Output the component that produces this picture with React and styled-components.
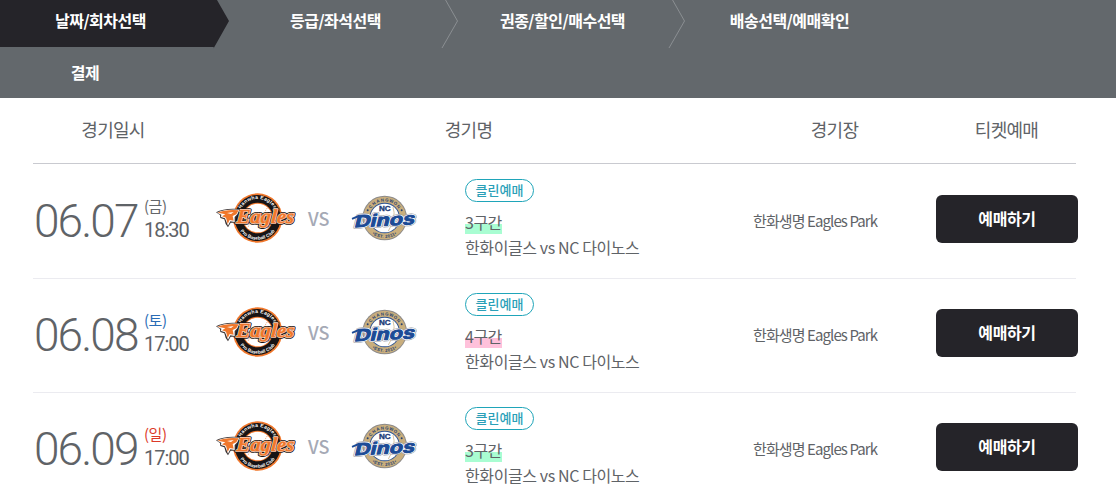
import React from 'react';
import styled, { createGlobalStyle } from 'styled-components';

const steps = [
  { title: '날짜/회차선택', width: 229, end: 28, active: true },
  { title: '등급/좌석선택', width: 229, end: 16 },
  { title: '권종/할인/매수선택', width: 227, end: 18 },
  { title: '배송선택/예매확인', width: 209, end: 0, last: true },
  { title: '결제', width: 170, end: 0, last: true },
];

const games = [
  { date: '06.07', day: '금', time: '18:30', color: '#63666a', section: '3구간', mark: '#a9fdd2' },
  { date: '06.08', day: '토', time: '17:00', color: '#2a6cb5', section: '4구간', mark: '#ffc1db' },
  { date: '06.09', day: '일', time: '17:00', color: '#dc3a2a', section: '3구간', mark: '#a9fdd2' },
];

const EaglesLogo = ({ id }) => (
  <EaglesSvg viewBox="0 0 240 156">
    <defs>
      <path id={`${id}-top`} d="M68 78 A55 55 0 0 1 182 78" />
      <path id={`${id}-bottom`} d="M60 78 A65 65 0 0 0 190 78" />
    </defs>
    <circle cx="125" cy="78" r="74" fill="#f0772b" />
    <circle cx="125" cy="78" r="69" fill="#171415" />
    <circle cx="125" cy="78" r="46" fill="#f0772b" />
    <circle cx="125" cy="78" r="43" fill="#fff" />
    <path d="M96 48 Q112 64 97 104 M154 48 Q138 64 153 104" fill="none" stroke="#f3a06f" strokeWidth="3" strokeDasharray="4 3" />
    <text fontFamily="Liberation Sans" fontSize="15" fontWeight="700" fill="#fff" letterSpacing="1">
      <textPath href={`#${id}-top`} startOffset="50%" textAnchor="middle">Hanwha Eagles</textPath>
    </text>
    <text fontFamily="Liberation Sans" fontSize="14" fontWeight="700" fill="#fff">
      <textPath href={`#${id}-bottom`} startOffset="50%" textAnchor="middle">Pro Baseball Club</textPath>
    </text>
    <g transform="translate(60 94) skewX(-4)" fontFamily="Liberation Serif" fontStyle="italic" fontWeight="700" fontSize="60" strokeLinejoin="round">
      <text textLength="174" lengthAdjust="spacingAndGlyphs" fill="#171415" stroke="#171415" strokeWidth="10">Eagles</text>
      <text aria-hidden="true" textLength="174" lengthAdjust="spacingAndGlyphs" fill="#f5c6a4" stroke="#fbdcc6" strokeWidth="5">Eagles</text>
      <text aria-hidden="true" textLength="174" lengthAdjust="spacingAndGlyphs" fill="#f0772b" stroke="#f0772b" strokeWidth="1">Eagles</text>
    </g>
    <path d="M0 61 Q24 47 72 51 L66 67 L60 80 L58 92 L44 92 L36 106 L29 96 L25 82 L13 78 L12 69Z" fill="#3a3232" />
    <path d="M3 62 Q28 50 70 53 L64 67 L56 75 L56 90 L43 88 L36 101 L27 79 L15 75 L16 68Z" fill="#fff" />
    <path d="M5 62 Q30 52 68 55 L61 67 L50 72 L53 86 L41 84 L35 96 L30 77 L18 73 L28 67Z" fill="#f0772b" />
    <path d="M33 63 L53 60 L45 66Z" fill="#fff" />
  </EaglesSvg>
);

// letters of the ring are set one by one, so each stays inside the ring
const ringTop = 'CHANGWON'.split('');

const DinosLogo = ({ id }) => (
  <DinosSvg viewBox="0 0 198 138">
    <defs>
      <path id={`${id}-bottom`} d="M41 69 A60 60 0 0 0 161 69" />
    </defs>
    <circle cx="101" cy="69" r="67" fill="#8d8b8a" />
    <circle cx="101" cy="69" r="64" fill="#c9ae7d" />
    <circle cx="101" cy="69" r="46" fill="#2b5292" />
    <circle cx="101" cy="69" r="43" fill="#fff" />
    <path d="M126 36 Q137 68 112 108" fill="none" stroke="#d9c7a4" strokeWidth="3" />
    {ringTop.map((letter, i) => (
      <text
        key={i}
        transform={`rotate(${(i - 3.5) * 14.5} 101 69)`}
        x="101"
        y="19"
        textAnchor="middle"
        fontFamily="Liberation Sans"
        fontSize="13"
        fontWeight="700"
        fill="#25406f"
      >
        {letter}
      </text>
    ))}
    <circle cx="50" cy="46" r="3" fill="#25406f" />
    <circle cx="152" cy="46" r="3" fill="#25406f" />
    <text fontFamily="Liberation Sans" fontSize="13" fontWeight="700" fill="#25406f" letterSpacing="1">
      <textPath href={`#${id}-bottom`} startOffset="50%" textAnchor="middle">•EST. 2011•</textPath>
    </text>
    <text x="84" y="48" textLength="35" lengthAdjust="spacingAndGlyphs" fontFamily="Liberation Sans" fontSize="20" fontWeight="700" fill="#1c3c78" stroke="#1c3c78">NC</text>
    {/* wordmark, rising slightly to the right */}
    <g transform="translate(9 97) skewY(-3) skewX(-14)" fontFamily="Liberation Sans" fontWeight="700" fontSize="51" strokeLinejoin="round">
      <text textLength="180" lengthAdjust="spacingAndGlyphs" fill="#9a9ca2" stroke="#9a9ca2" strokeWidth="10">Dinos</text>
      <text aria-hidden="true" textLength="180" lengthAdjust="spacingAndGlyphs" fill="#fff" stroke="#fff" strokeWidth="7">Dinos</text>
      <text aria-hidden="true" textLength="180" lengthAdjust="spacingAndGlyphs" fill="#1c4b96" stroke="#1c4b96" strokeWidth="3">Dinos</text>
    </g>
    <path d="M2 69 L24 59 L22 67 L4 74Z" fill="#1c4b96" />
  </DinosSvg>
);

const App = () => {
  return (
    <Page>
      <GlobalStyle />
      <Steps>
        {steps.map((step) => (
          <Step key={step.title} $width={step.width} $end={step.end} $active={step.active}>
            {step.title}
            {!step.last && (
              <Arrow viewBox="0 0 18 49">
                {step.active ? (
                  <>
                    <path d="M0 0H6L18 21L2.500 48.500V47H0Z" fill="#252429" />
                    <path d="M0 47H2.500V49H0Z" fill="#63686c" />
                  </>
                ) : (
                  <path d="M5 -1L17.500 21L2 48" fill="none" stroke="#8b8f92" />
                )}
              </Arrow>
            )}
          </Step>
        ))}
      </Steps>

      <Table>
        <Header>
          <span>경기일시</span>
          <span>경기명</span>
          <span>경기장</span>
          <span>티켓예매</span>
        </Header>
        {games.map((game) => (
          <Row key={game.date}>
            <DateCell>
              <BigDate>{game.date}</BigDate>
              <DayTime>
                <Day $color={game.color}>({game.day})</Day>
                <Time>{game.time}</Time>
              </DayTime>
            </DateCell>
            <Match>
              <EaglesLogo id={`eagles-${game.date}`} />
              <Versus>VS</Versus>
              <DinosLogo id={`dinos-${game.date}`} />
              <Info>
                <Badge>클린예매</Badge>
                <Section $mark={game.mark}>{game.section}</Section>
                <Title>한화이글스 vs NC 다이노스</Title>
              </Info>
            </Match>
            <Stadium>한화생명 Eagles Park</Stadium>
            <Ticket>
              <Button type="button">예매하기</Button>
            </Ticket>
          </Row>
        ))}
      </Table>
    </Page>
  );
};

export default App;

const GlobalStyle = createGlobalStyle`
  * {
    box-sizing: border-box;
  }

  body {
    margin: 0;
    background: #fff;
  }
`
const Page = styled.div`
  width: 1116px;
  height: 491px;
  overflow: hidden;
  color: #5f6367;
  font-family: 'Noto Sans CJK KR', 'Noto Sans', sans-serif;
`
const Steps = styled.div`
  display: flex;
  flex-wrap: wrap;
  align-content: flex-start;
  height: 98px;
  padding-right: 150px;
  background: #63686c;
`
const Step = styled.div`
  position: relative;
  width: ${(p) => p.$width}px;
  height: 47px;
  margin-bottom: 5px;
  padding-right: ${(p) => p.$end}px;
  color: #fff;
  font-size: 16px;
  font-weight: 700;
  letter-spacing: -0.5px;
  line-height: 40px;
  text-align: center;
  white-space: nowrap;
  background: ${(p) => (p.$active ? 'linear-gradient(to right, #252429 211px, transparent 211px)' : 'none')};
`
const Arrow = styled.svg`
  position: absolute;
  top: 0;
  right: 0;
  width: 18px;
  height: 49px;
`
const Table = styled.div`
  width: 1043px;
  margin-left: 33px;
`
const Header = styled.div`
  display: grid;
  grid-template-columns: 160px 551px 181px 163px;
  height: 66px;
  border-bottom: 1px solid #c9cad0;
  font-size: 18px;
  letter-spacing: -0.7px;
  line-height: 62px;
  text-align: center;
`
const Row = styled.div`
  display: grid;
  grid-template-columns: 160px 551px 181px 163px;
  height: 114px;
  box-shadow: 0 1px #ebebf0;
`
const DateCell = styled.div`
  display: flex;
  padding: 33px 0 0 1px;
  white-space: nowrap;
`
const BigDate = styled.span`
  width: 110px;
  font-family: Roboto, sans-serif;
  font-size: 46px;
  font-weight: 300;
  letter-spacing: -1.9px;
  line-height: 48px;
`
const DayTime = styled.div`
  display: flex;
  flex-direction: column;
`
const Day = styled.span`
  height: 21px;
  color: ${(p) => p.$color};
  font-size: 15px;
  letter-spacing: -0.5px;
  line-height: 18px;
`
const Time = styled.span`
  font-family: Roboto, sans-serif;
  font-size: 20px;
  letter-spacing: -1px;
  line-height: 24px;
`
const Match = styled.div`
  display: flex;
  padding-left: 23px;
`
const EaglesSvg = styled.svg`
  flex: none;
  width: 80px;
  height: 52px;
  margin-top: 28px;
`
const Versus = styled.span`
  width: 22px;
  margin: 42px 21px 0 12px;
  color: #a5a9b5;
  font-size: 18px;
  font-weight: 500;
  line-height: 24px;
`
const DinosSvg = styled.svg`
  flex: none;
  width: 66px;
  height: 46px;
  margin-top: 31px;
`
const Info = styled.div`
  display: flex;
  flex-direction: column;
  align-items: flex-start;
  margin: 15px 0 0 48px;
  white-space: nowrap;
`
const Badge = styled.span`
  width: 69px;
  height: 23px;
  border: 1px solid #1fa5b9;
  border-radius: 12px;
  color: #2a9fb8;
  font-size: 13px;
  font-weight: 500;
  line-height: 20px;
  text-align: center;
`
const Section = styled.span`
  height: 22px;
  margin-top: 10px;
  background: linear-gradient(to bottom, transparent 12px, ${(p) => p.$mark} 12px);
  font-size: 16px;
  letter-spacing: -0.5px;
  line-height: 20px;
`
const Title = styled.span`
  margin-top: 2px;
  font-size: 16px;
  letter-spacing: -0.4px;
  line-height: 22px;
`
const Stadium = styled.div`
  padding: 46px 0 0 9px;
  font-size: 15px;
  letter-spacing: -0.9px;
  line-height: 22px;
  white-space: nowrap;
`
const Ticket = styled.div`
  padding: 31px 0 0 11px;
`
const Button = styled.button`
  display: block;
  width: 142px;
  height: 48px;
  padding: 0 0 2px;
  border: 0;
  border-radius: 6px;
  background: #252429;
  color: #fff;
  font-family: inherit;
  font-size: 16px;
  font-weight: 700;
  letter-spacing: -0.4px;
  line-height: 46px;
`
